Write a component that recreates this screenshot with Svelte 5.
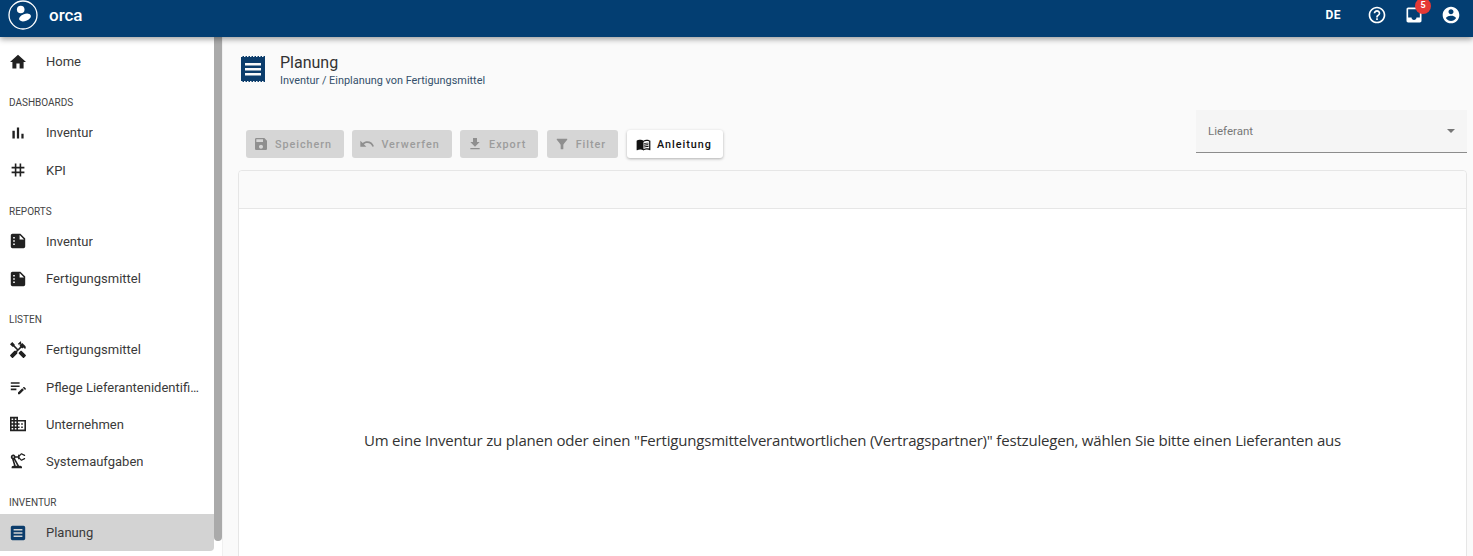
<script lang="ts">
  const icons = {
    home: "M10 20v-6h4v6h5v-8h3L12 3 2 12h3v8z",
    bars: "M5 9.2h3V19H5zM10.6 5h2.8v14h-2.8zm5.6 8H19v6h-2.8z",
    tag: "M20 10V8h-4V4h-2v4h-4V4H8v4H4v2h4v4H4v2h4v4h2v-4h4v4h2v-4h4v-2h-4v-4h4zm-6 4h-4v-4h4v4z",
    report: "M15 3H5c-1.1 0-2 .9-2 2v14c0 1.1.9 2 2 2h14c1.1 0 2-.9 2-2V9l-6-6zM8 17H6v-2h2v2zm0-4H6v-2h2v2zm0-4H6V7h2v2zm6 1V4.5l5.5 5.5H14z",
    tools: "M21.67 18.17l-5.3-5.3h-.99l-2.54 2.54v.99l5.3 5.3c.39.39 1.02.39 1.41 0l2.12-2.12c.39-.38.39-1.02 0-1.41z M17.34 10.19l1.41-1.41 2.12 2.12c1.17-1.17 1.17-3.07 0-4.24l-3.54-3.54-1.41 1.41V1.71l-.7-.71-3.54 3.54.71.71h2.83l-1.41 1.41 1.06 1.06-2.89 2.89-4.13-4.13V5.06L4.83 2.04 2 4.87 5.03 7.9h1.41l4.13 4.13-.85.85H7.6l-5.3 5.3c-.39.39-.39 1.02 0 1.41l2.12 2.12c.39.39 1.02.39 1.41 0l5.3-5.3v-2.12l5.15-5.15 1.06 1.05z",
    note: "M3 10h11v2H3zm0-2h11V6H3zm0 8h7v-2H3zm15.01-3.13.71-.71c.39-.39 1.02-.39 1.41 0l1.42 1.42c.39.39.39 1.02 0 1.41l-.71.71zm-.71.71L12 18.88V21h2.12l5.3-5.3z",
    domain: "M12 7V3H2v18h20V7H12zM6 19H4v-2h2v2zm0-4H4v-2h2v2zm0-4H4V9h2v2zm0-4H4V5h2v2zm4 12H8v-2h2v2zm0-4H8v-2h2v2zm0-4H8V9h2v2zm0-4H8V5h2v2zm10 12h-8v-2h2v-2h-2v-2h2v-2h-2V9h8v10zm-2-8h-2v2h2v-2zm0 4h-2v2h2v-2z",
    robot: "M19.93 8.35l-3.6 1.68L14 7.7V6.3l2.33-2.33 3.6 1.68c.38.18.82.01 1-.36.18-.38.01-.82-.36-1l-3.92-1.83c-.38-.18-.83-.09-1.13.2l-1.74 1.74c-.18-.24-.46-.4-.78-.4-.55 0-1 .45-1 1v1H8.82C8.34 4.65 7.26 4 6 4 4.34 4 3 5.34 3 7c0 1.1.6 2.05 1.48 2.58L7.08 18H6c-1.1 0-2 .9-2 2v1h13v-1c0-1.1-.9-2-2-2h-1.62L8.41 8.77c.17-.24.31-.49.41-.77H12v1c0 .55.45 1 1 1 .32 0 .6-.16.78-.4l1.74 1.74c.3.3.75.38 1.13.2l3.92-1.83c.38-.18.54-.62.36-1-.18-.37-.62-.54-1-.36zM6 8c-.55 0-1-.45-1-1s.45-1 1-1 1 .45 1 1-.45 1-1 1zm5.11 10H9.17l-2.46-8h.1l4.3 8z",
    article: "M19 3H5c-1.1 0-2 .9-2 2v14c0 1.1.9 2 2 2h14c1.1 0 2-.9 2-2V5c0-1.1-.9-2-2-2zM6.5 7h11v2h-11zm0 4h11v2h-11zm0 4h11v2h-11z",
    save: "M17 3H5c-1.11 0-2 .9-2 2v14c0 1.1.89 2 2 2h14c1.1 0 2-.9 2-2V7l-4-4zm-5 16c-1.66 0-3-1.34-3-3s1.34-3 3-3 3 1.34 3 3-1.34 3-3 3zm3-10H5V5h10v4z",
    undo: "M12.5 8c-2.65 0-5.05.99-6.9 2.6L2 7v9h9l-3.62-3.62c1.39-1.16 3.16-1.88 5.12-1.88 3.54 0 6.55 2.31 7.6 5.5l2.37-.78C21.08 11.03 17.15 8 12.5 8z",
    download: "M19 9h-4V3H9v6H5l7 7 7-7zM5 18v2h14v-2H5z",
    filter: "M4.25 5.61C6.27 8.2 10 13 10 13v6c0 .55.45 1 1 1h2c.55 0 1-.45 1-1v-6s3.72-4.8 5.74-7.39c.51-.66.04-1.61-.79-1.61H5.04c-.83 0-1.3.95-.79 1.61z",
    book: "M21 5c-1.11-.35-2.33-.5-3.5-.5-1.95 0-4.05.4-5.5 1.5-1.45-1.1-3.55-1.5-5.5-1.5S2.45 4.9 1 6v14.65c0 .25.25.5.5.5.1 0 .15-.05.25-.05C3.1 20.45 5.05 20 6.5 20c1.95 0 4.05.4 5.5 1.5 1.35-.85 3.8-1.5 5.5-1.5 1.65 0 3.35.3 4.75 1.05.1.05.15.05.25.05.25 0 .5-.25.5-.5V6c-.6-.45-1.25-.75-2-1zm0 13.5c-1.1-.35-2.3-.5-3.5-.5-1.7 0-4.15.65-5.5 1.5V8c1.35-.85 3.8-1.5 5.5-1.5 1.2 0 2.4.15 3.5.5v11.5zM17.5 10.5c.88 0 1.73.09 2.5.26V9.24c-.79-.15-1.64-.24-2.5-.24-1.7 0-3.24.29-4.5.83v1.66c1.13-.64 2.7-.99 4.5-.99zM13 12.49v1.66c1.13-.64 2.7-.99 4.5-.99.88 0 1.73.09 2.5.26V11.9c-.79-.15-1.64-.24-2.5-.24-1.7 0-3.24.3-4.5.83zm4.500 1.84c-1.7 0-3.24.29-4.5.83v1.66c1.13-.64 2.7-.99 4.5-.99.88 0 1.73.09 2.5.26v-1.52c-.79-.16-1.64-.24-2.5-.24z",
    help: "M11 18h2v-2h-2v2zm1-16C6.48 2 2 6.48 2 12s4.48 10 10 10 10-4.48 10-10S17.52 2 12 2zm0 18c-4.41 0-8-3.59-8-8s3.59-8 8-8 8 3.59 8 8-3.59 8-8 8zm0-14c-2.21 0-4 1.79-4 4h2c0-1.1.9-2 2-2s2 .9 2 2c0 2-3 1.75-3 5h2c0-2.25 3-2.5 3-5 0-2.21-1.79-4-4-4z",
    inbox: "M19 3H4.99c-1.11 0-1.98.89-1.98 2L3 19c0 1.1.88 2 1.99 2H19c1.1 0 2-.9 2-2V5c0-1.11-.9-2-2-2zm0 12h-4c0 1.66-1.35 3-3 3s-3-1.34-3-3H4.99V5H19v10z",
    account: "M12 2C6.48 2 2 6.48 2 12s4.48 10 10 10 10-4.48 10-10S17.52 2 12 2zm0 3c1.66 0 3 1.34 3 3s-1.34 3-3 3-3-1.34-3-3 1.34-3 3-3zm0 14.2c-2.5 0-4.71-1.28-6-3.22.03-1.99 4-3.08 6-3.08 1.99 0 5.97 1.09 6 3.08-1.29 1.94-3.5 3.22-6 3.22z"
  };

  const nav = [
    { items: [{ icon: "home", label: "Home" }] },
    {
      title: "DASHBOARDS",
      items: [
        { icon: "bars", label: "Inventur" },
        { icon: "tag", label: "KPI" }
      ]
    },
    {
      title: "REPORTS",
      items: [
        { icon: "report", label: "Inventur" },
        { icon: "report", label: "Fertigungsmittel" }
      ]
    },
    {
      title: "LISTEN",
      items: [
        { icon: "tools", label: "Fertigungsmittel" },
        { icon: "note", label: "Pflege Lieferantenidentifikation" },
        { icon: "domain", label: "Unternehmen" },
        { icon: "robot", label: "Systemaufgaben" }
      ]
    },
    {
      title: "INVENTUR",
      items: [{ icon: "article", label: "Planung", active: true }]
    }
  ];

  const actions = [
    { icon: "save", label: "Speichern" },
    { icon: "undo", label: "Verwerfen" },
    { icon: "download", label: "Export" },
    { icon: "filter", label: "Filter" }
  ];
</script>

<header class="topbar">
  <svg class="logo" viewBox="0 0 30 30" aria-hidden="true">
    <circle cx="15" cy="15" r="14" fill="none" stroke="#fff" stroke-width="1.3" />
    <circle cx="12.700" cy="9.500" r="3.800" fill="#fff" />
    <ellipse cx="17" cy="17.500" rx="6.200" ry="3.500" transform="rotate(-20 17 17.500)" fill="#fff" />
  </svg>
  <span class="brand">orca</span>
  <span class="lang">DE</span>
  <svg class="top-icon help" viewBox="0 0 24 24"><path d={icons.help} /></svg>
  <span class="inbox">
    <svg class="top-icon" viewBox="0 0 24 24"><path d={icons.inbox} /></svg>
    <span class="badge">5</span>
  </span>
  <svg class="top-icon account" viewBox="0 0 24 24"><path d={icons.account} /></svg>
</header>

<div class="body">
  <aside class="sidebar">
    <nav class="menu">
      {#each nav as group}
        {#if group.title}
          <div class="heading">{group.title}</div>
        {/if}
        {#each group.items as item}
          <div class="item" class:active={item.active}>
            <svg class="nav-icon" viewBox="0 0 24 24"><path d={icons[item.icon]} /></svg>
            <span class="label">{item.label}</span>
          </div>
        {/each}
      {/each}
    </nav>
    <div class="scrollbar"><div class="thumb"></div></div>
  </aside>

  <main class="content">
    <div class="title-row">
      <svg class="page-icon" viewBox="0 0 24 26">
        <path d="M0 1h1.500V0H3v1h1.500V0H6v1h1.500V0H9v1h1.500V0H12v1h1.500V0H15v1h1.500V0H18v1h1.500V0H21v1h1.500V0H24v26h-1.500v-1H21v1h-1.500v-1H18v1h-1.500v-1H15v1h-1.500v-1H12v1h-1.500v-1H9v1H7.500v-1H6v1H4.500v-1H3v1H1.500v-1H0z" fill="#0b3c6b" />
        <path d="M4 7h16v2.500H4zm0 5h16v2.500H4zm0 5h16v2.500H4z" fill="#fafafa" />
      </svg>
      <div>
        <h1>Planung</h1>
        <p>Inventur / Einplanung von Fertigungsmittel</p>
      </div>
    </div>

    <div class="toolbar">
      <div class="buttons">
        {#each actions as action}
          <button class="btn" disabled>
            <svg viewBox="0 0 24 24"><path d={icons[action.icon]} /></svg>
            {action.label}
          </button>
        {/each}
        <button class="btn guide">
          <svg viewBox="0 0 24 24"><path d={icons.book} /></svg>
          Anleitung
        </button>
      </div>
      <div class="select">
        <span>Lieferant</span>
        <i class="arrow"></i>
      </div>
    </div>

    <section class="card">
      <div class="card-head"></div>
      <div class="card-body">
        <p>Um eine Inventur zu planen oder einen "Fertigungsmittelverantwortlichen (Vertragspartner)" festzulegen, wählen Sie bitte einen Lieferanten aus</p>
      </div>
    </section>
  </main>
</div>

<style>
  :global(body) {
    background: #fafafa;
    font-family: Roboto, "Liberation Sans", sans-serif;
    height: 556px;
    overflow: hidden;
  }

  .topbar {
    align-items: center;
    background: #033e72;
    box-shadow: 0 2px 6px rgba(0, 0, 0, 0.4);
    box-sizing: border-box;
    color: #fff;
    display: flex;
    height: 37px;
    padding: 0 12px 7px 8px;
    position: relative;
    z-index: 2;
  }

  .logo {
    height: 30px;
    width: 30px;
  }

  .brand {
    font-size: 17px;
    font-weight: 500;
    margin-left: 11px;
  }

  .lang {
    font-size: 12px;
    font-weight: 700;
    letter-spacing: 0.5px;
    margin-left: auto;
  }

  .top-icon {
    display: block;
    fill: #fff;
    height: 20px;
    width: 20px;
  }

  .help {
    margin-left: 26px;
  }

  .inbox {
    margin-left: 17px;
    position: relative;
  }

  .account {
    margin-left: 17px;
  }

  .badge {
    background: #e53935;
    border-radius: 50%;
    font-size: 9px;
    font-weight: 700;
    height: 16px;
    left: 11px;
    line-height: 14px;
    position: absolute;
    text-align: center;
    top: -7px;
    width: 16px;
  }

  .body {
    display: flex;
    height: 519px;
    overflow: hidden;
  }

  .sidebar {
    background: #fff;
    display: flex;
    flex: 0 0 222px;
    overflow: hidden;
  }

  .menu {
    flex: 1;
    min-width: 0;
    padding-top: 6px;
  }

  .heading {
    box-sizing: border-box;
    color: #444;
    font-size: 10px;
    height: 34.300px;
    line-height: 16px;
    padding: 15px 0 0 9px;
  }

  .item {
    align-items: center;
    border-radius: 0 0 4px 0;
    color: #3a3a3a;
    display: flex;
    font-size: 13px;
    height: 37.100px;
    padding: 0 13px 0 6px;
  }

  .item.active {
    background: #d3d3d3;
  }

  .nav-icon {
    fill: #212121;
    flex: none;
    height: 24px;
    margin-right: 16px;
    transform: scale(0.8);
    width: 24px;
  }

  .item.active .nav-icon {
    fill: #0b3c6b;
  }

  .label {
    overflow: hidden;
    text-overflow: ellipsis;
    white-space: nowrap;
  }

  .scrollbar {
    flex: 0 0 8px;
  }

  .thumb {
    background: #aaa;
    border-radius: 0 0 4px 4px;
    height: 504px;
  }

  .content {
    border-left: 1px solid #f0f0f0;
    flex: 1;
    min-width: 0;
    overflow: hidden;
    padding: 0 6px 0 15px;
  }

  .title-row {
    align-items: flex-start;
    display: flex;
    gap: 15px;
    padding: 19px 0 0 3px;
  }

  .page-icon {
    height: 26px;
    width: 24px;
  }

  h1 {
    color: #333;
    font-size: 16px;
    font-weight: 400;
    line-height: 18px;
    margin: -2px 0 0;
  }

  .title-row p {
    color: #34506b;
    font-size: 10.900px;
    line-height: 14px;
    margin: 2px 0 0;
  }

  .toolbar {
    align-items: flex-end;
    display: flex;
    justify-content: space-between;
    margin-top: 22px;
  }

  .buttons {
    display: flex;
    gap: 8.500px;
    margin: 0 0 -5px 8px;
  }

  .btn {
    align-items: center;
    background: #d6d6d6;
    border: 0;
    border-radius: 3px;
    color: #9c9c9c;
    display: flex;
    font-family: inherit;
    font-size: 10.800px;
    font-weight: 500;
    gap: 6px;
    height: 28px;
    letter-spacing: 0.950px;
    padding: 0 12px 0 7px;
  }

  .btn svg {
    fill: #8f8f8f;
    height: 16px;
    width: 16px;
  }

  .guide {
    background: #fff;
    box-shadow: 0 1px 3px rgba(0, 0, 0, 0.3);
    color: #111;
    padding: 0 11.500px 0 9.500px;
  }

  .guide svg {
    fill: #111;
    height: 15px;
    width: 15px;
  }

  .select {
    align-items: center;
    background: #f5f5f5;
    border-bottom: 1px solid #8c8c8c;
    box-sizing: border-box;
    color: #777;
    display: flex;
    font-size: 11.500px;
    height: 43px;
    justify-content: space-between;
    padding: 0 12px 0 12px;
    width: 271px;
  }

  .arrow {
    border-left: 4px solid transparent;
    border-right: 4px solid transparent;
    border-top: 4px solid #777;
    height: 0;
    width: 0;
  }

  .card {
    background: #fff;
    border: 1px solid #e6e6e6;
    border-radius: 4px 4px 0 0;
    height: 420px;
    margin-top: 17px;
  }

  .card-head {
    background: #fafafa;
    border-bottom: 1px solid #e6e6e6;
    border-radius: 4px 4px 0 0;
    height: 37px;
  }

  .card-body {
    display: flex;
    justify-content: center;
    padding-top: 220px;
  }

  .card-body p {
    color: #333;
    font-family: "Open Sans", sans-serif;
    font-size: 15px;
    letter-spacing: -0.190px;
    line-height: 22px;
    margin: 0;
    white-space: nowrap;
  }
</style>
